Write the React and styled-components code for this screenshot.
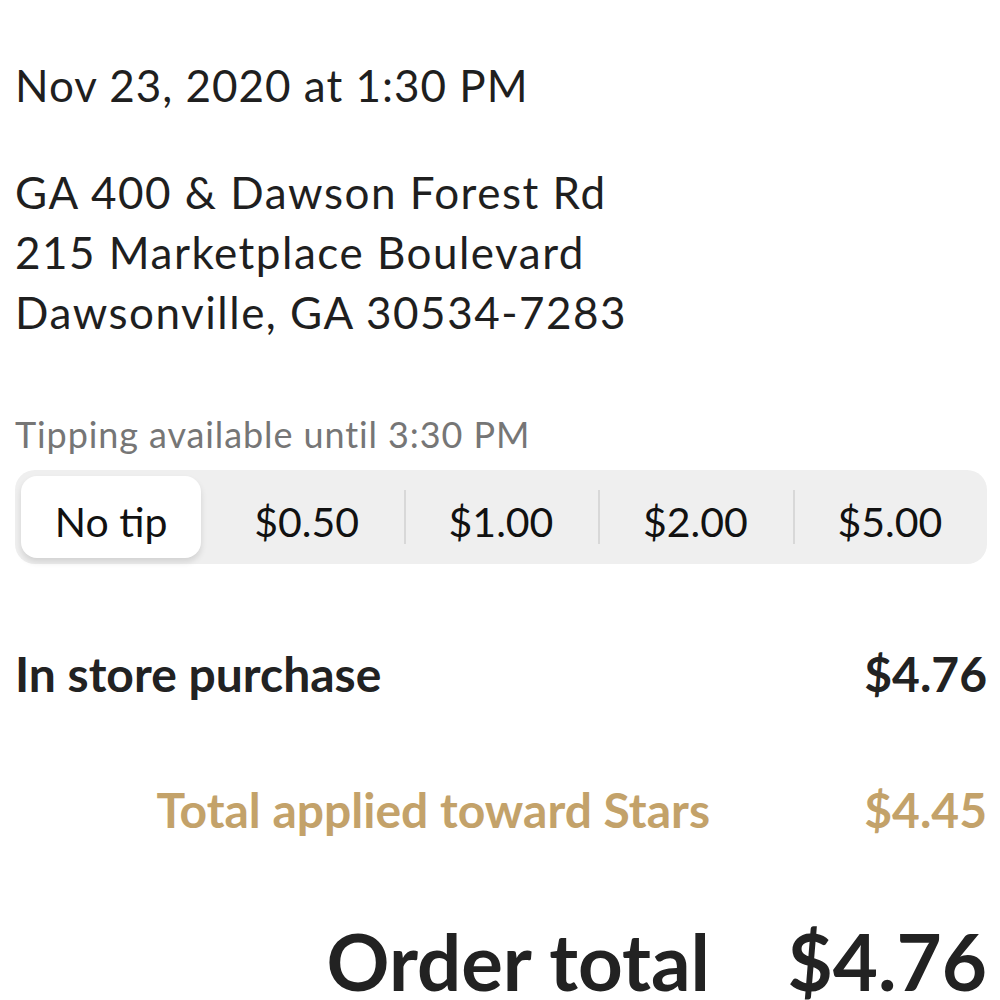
import React, { useState } from "react";
import styled, { createGlobalStyle } from "styled-components";

const GlobalStyle = createGlobalStyle`
  html, body {
    margin: 0;
    padding: 0;
    background: #fff;
  }
  body {
    font-family: Lato, "Noto Sans", sans-serif;
    color: #1f1f1f;
  }
`;

const tips = ["No tip", "$0.50", "$1.00", "$2.00", "$5.00"];

export default function App() {
  const [selected, setSelected] = useState(0);

  return (
    <>
      <GlobalStyle />
      <Page>
        <DateLine>Nov 23, 2020 at 1:30 PM</DateLine>
        <Address>
          <span>GA 400 &amp; Dawson Forest Rd</span>
          <span>215 Marketplace Boulevard</span>
          <span>Dawsonville, GA 30534-7283</span>
        </Address>

        <TipNote>Tipping available until 3:30 PM</TipNote>
        <TipBar>
          {tips.map((t, i) => (
            <TipOption
              key={t}
              $active={i === selected}
              $divider={i > 0 && i !== selected && i - 1 !== selected}
              onClick={() => setSelected(i)}
            >
              {t}
            </TipOption>
          ))}
        </TipBar>

        <Summary>
          <Label>In store purchase</Label>
          <Amount>$4.76</Amount>
          <Label $gold $right>Total applied toward Stars</Label>
          <Amount $gold>$4.45</Amount>
          <Label $big $right>Order total</Label>
          <Amount $big>$4.76</Amount>
        </Summary>
      </Page>
    </>
  );
}

const Page = styled.div`
  padding: 59px 13px 0 15px;
`;

const DateLine = styled.div`
  font-size: 44px;
  line-height: 52px;
  letter-spacing: 1px;
`;

const Address = styled.div`
  margin-top: 51px;
  display: flex;
  flex-direction: column;
  font-size: 44px;
  line-height: 60px;
  letter-spacing: 1.5px;
`;

const TipNote = styled.div`
  margin-top: 72px;
  font-size: 36px;
  line-height: 40px;
  letter-spacing: 0.9px;
  color: #767676;
`;

const TipBar = styled.div`
  margin-top: 16px;
  display: grid;
  grid-template-columns: repeat(5, 1fr);
  align-items: center;
  height: 94px;
  background: #efefef;
  border-radius: 20px;
`;

const TipOption = styled.button`
  position: relative;
  height: 82px;
  margin: 0 ${(p) => (p.$active ? "8px 0 6px" : "0")};
  border: none;
  border-radius: 16px;
  background: ${(p) => (p.$active ? "#fff" : "transparent")};
  box-shadow: ${(p) => (p.$active ? "0 4px 6px rgba(0,0,0,0.12)" : "none")};
  font-family: inherit;
  font-size: 41px;
  padding: 8px 0 0;
  color: #111;
  cursor: pointer;

  &::before {
    content: "";
    display: ${(p) => (p.$divider ? "block" : "none")};
    position: absolute;
    left: 0;
    top: 14px;
    bottom: 14px;
    width: 2px;
    background: #d8d8d8;
  }
`;

const Summary = styled.div`
  margin-top: 86px;
  display: grid;
  grid-template-columns: 1fr 277px;
  row-gap: 88px;
  align-items: baseline;
`;

const Label = styled.div`
  font-size: ${(p) => (p.$big ? "78px" : "48px")};
  font-weight: 700;
  color: ${(p) => (p.$gold ? "#c3a26a" : "#222")};
  text-align: ${(p) => (p.$right ? "right" : "left")};
  line-height: 1;
`;

const Amount = styled.div`
  font-size: ${(p) => (p.$big ? "78px" : "48px")};
  font-weight: 700;
  color: ${(p) => (p.$gold ? "#c3a26a" : "#222")};
  text-align: right;
  line-height: 1;
`;
